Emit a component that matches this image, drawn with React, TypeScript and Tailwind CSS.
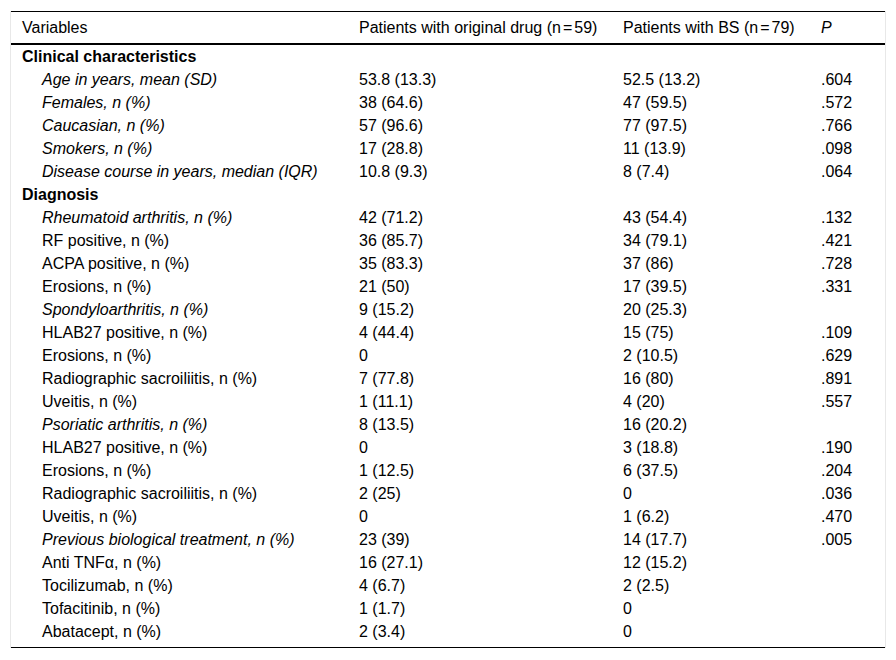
import React from 'react';

type Row = {
  label: string;
  a?: string;
  b?: string;
  p?: string;
  kind: 'section' | 'italic' | 'plain';
};

const rows: Row[] = [
  { label: 'Clinical characteristics', kind: 'section' },
  { label: 'Age in years, mean (SD)', a: '53.8 (13.3)', b: '52.5 (13.2)', p: '.604', kind: 'italic' },
  { label: 'Females, n (%)', a: '38 (64.6)', b: '47 (59.5)', p: '.572', kind: 'italic' },
  { label: 'Caucasian, n (%)', a: '57 (96.6)', b: '77 (97.5)', p: '.766', kind: 'italic' },
  { label: 'Smokers, n (%)', a: '17 (28.8)', b: '11 (13.9)', p: '.098', kind: 'italic' },
  { label: 'Disease course in years, median (IQR)', a: '10.8 (9.3)', b: '8 (7.4)', p: '.064', kind: 'italic' },
  { label: 'Diagnosis', kind: 'section' },
  { label: 'Rheumatoid arthritis, n (%)', a: '42 (71.2)', b: '43 (54.4)', p: '.132', kind: 'italic' },
  { label: 'RF positive, n (%)', a: '36 (85.7)', b: '34 (79.1)', p: '.421', kind: 'plain' },
  { label: 'ACPA positive, n (%)', a: '35 (83.3)', b: '37 (86)', p: '.728', kind: 'plain' },
  { label: 'Erosions, n (%)', a: '21 (50)', b: '17 (39.5)', p: '.331', kind: 'plain' },
  { label: 'Spondyloarthritis, n (%)', a: '9 (15.2)', b: '20 (25.3)', kind: 'italic' },
  { label: 'HLAB27 positive, n (%)', a: '4 (44.4)', b: '15 (75)', p: '.109', kind: 'plain' },
  { label: 'Erosions, n (%)', a: '0', b: '2 (10.5)', p: '.629', kind: 'plain' },
  { label: 'Radiographic sacroiliitis, n (%)', a: '7 (77.8)', b: '16 (80)', p: '.891', kind: 'plain' },
  { label: 'Uveitis, n (%)', a: '1 (11.1)', b: '4 (20)', p: '.557', kind: 'plain' },
  { label: 'Psoriatic arthritis, n (%)', a: '8 (13.5)', b: '16 (20.2)', kind: 'italic' },
  { label: 'HLAB27 positive, n (%)', a: '0', b: '3 (18.8)', p: '.190', kind: 'plain' },
  { label: 'Erosions, n (%)', a: '1 (12.5)', b: '6 (37.5)', p: '.204', kind: 'plain' },
  { label: 'Radiographic sacroiliitis, n (%)', a: '2 (25)', b: '0', p: '.036', kind: 'plain' },
  { label: 'Uveitis, n (%)', a: '0', b: '1 (6.2)', p: '.470', kind: 'plain' },
  { label: 'Previous biological treatment, n (%)', a: '23 (39)', b: '14 (17.7)', p: '.005', kind: 'italic' },
  { label: 'Anti TNFα, n (%)', a: '16 (27.1)', b: '12 (15.2)', kind: 'plain' },
  { label: 'Tocilizumab, n (%)', a: '4 (6.7)', b: '2 (2.5)', kind: 'plain' },
  { label: 'Tofacitinib, n (%)', a: '1 (1.7)', b: '0', kind: 'plain' },
  { label: 'Abatacept, n (%)', a: '2 (3.4)', b: '0', kind: 'plain' },
];

const cols = 'grid grid-cols-[337px_264px_198px_1fr]';

export default function App() {
  return (
    <div
      className="min-h-[660px] bg-white pt-[11px] pl-[10px] text-[16px] leading-[23px] text-black"
      style={{ fontFamily: '"Liberation Sans", Arial, sans-serif' }}
    >
      <div className="w-[876px] border-x border-[#e8e8e8]">
        <div className="border-t border-black">
          {/* header */}
          <div className={`${cols} border-b-2 border-black py-1`}>
            <div className="pl-[11px]">Variables</div>
            <div className="pl-[11px]">Patients with original drug (n<span className="mx-[2px]">=</span>59)</div>
            <div className="pl-[11px]">Patients with BS (n<span className="mx-[2px]">=</span>79)</div>
            <div className="pl-[11px] italic">P</div>
          </div>

          <div className="border-b border-black pb-[4px]">
            {rows.map((r, i) => (
              <div key={i} className={cols}>
                {r.kind === 'section' ? (
                  <div className="pl-[11px] font-bold">{r.label}</div>
                ) : (
                  <div className={`pl-[31px] ${r.kind === 'italic' ? 'italic' : ''}`}>{r.label}</div>
                )}
                <div className="pl-[11px]">{r.a}</div>
                <div className="pl-[11px]">{r.b}</div>
                <div className="pl-[11px]">{r.p}</div>
              </div>
            ))}
          </div>
        </div>
      </div>
    </div>
  );
}
